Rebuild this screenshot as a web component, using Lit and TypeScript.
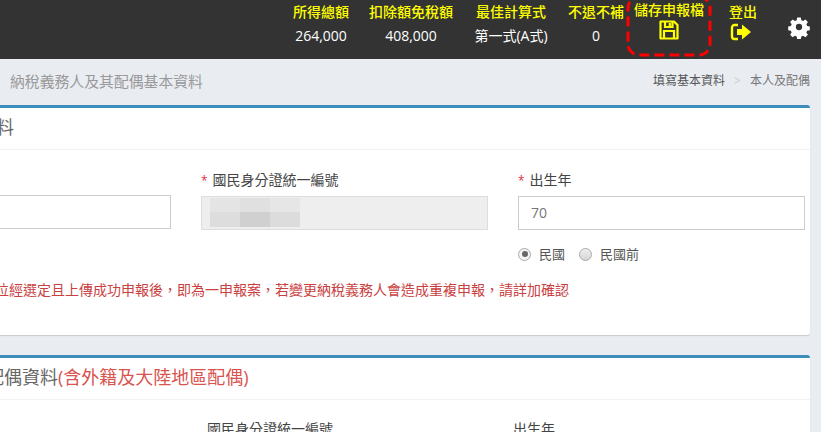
import { LitElement, html, css } from "lit";
import { customElement } from "lit/decorators.js";

@customElement("app-root")
export class AppRoot extends LitElement {
  static styles = css`
    :host {
      display: block;
      width: 821px;
      height: 432px;
      overflow: hidden;
      position: relative;
      background: #e9edf2;
      font-family: "Open Sans", "Noto Sans CJK TC", sans-serif;
      font-size: 14px;
      color: #444;
    }
    .top {
      height: 59px;
      background: #333;
      display: grid;
      grid-template-columns: 84px 96px 104px 66px 80px 68px 44px;
      justify-content: end;
      position: relative;
    }
    .cell {
      display: flex;
      flex-direction: column;
      align-items: center;
      color: #fff;
      padding-top: 2px;
      white-space: nowrap;
    }
    .lab {
      color: #ff0;
      font-weight: 500;
      font-size: 14px;
      line-height: 20px;
    }
    .val {
      margin-top: 4px;
      line-height: 20px;
      font-size: 14px;
    }
    .save { padding-top: 0; }
    .save svg { display: block; }
    .logout svg { display: block; margin-right: 4px; }
    .gear { padding-top: 15px; }
    .dash { position: absolute; left: 626px; top: -5px; }
    .crumbs {
      height: 46px;
      display: flex;
      justify-content: space-between;
      padding: 0 11px 0 10px;
    }
    .pagetitle {
      font-size: 14.85px;
      color: #999;
      line-height: 44px;
    }
    .trail {
      font-size: 12px;
      line-height: 44px;
      color: #555;
      display: flex;
    }
    .sep { color: #ccc; margin: 0 9px; }
    .trail .now { color: #777; }
    .card {
      margin-left: -131px;
      width: 941px;
      box-sizing: border-box;
      background: #fff;
      border-top: 3px solid #3c8dbc;
      border-radius: 3px;
      box-shadow: 0 1px 1px rgba(0, 0, 0, 0.15);
    }
    .one { height: 230px; margin-bottom: 20px; }
    .two { height: 120px; }
    .head {
      height: 41px;
      border-bottom: 1px solid #f2f2f2;
      font-size: 18px;
      line-height: 39px;
      color: #666;
      white-space: nowrap;
    }
    .one .head { padding-left: 73px; }
    .two .head { padding-left: 117px; }
    .paren { color: #d9534f; }
    .row {
      display: grid;
      grid-template-columns: 287px 287px 287px;
      column-gap: 30px;
      padding: 19px 0 0 15px;
    }
    label {
      display: block;
      line-height: 22px;
      font-size: 14px;
      margin-bottom: 4px;
      color: #444;
    }
    .star { color: #d9323a; font-size: 12px; margin-right: 5px; }
    .input {
      height: 34px;
      box-sizing: border-box;
      border: 1px solid #ccc;
      padding: 0 12px;
      line-height: 32px;
      color: #777;
      background: #fff;
    }
    .input.off {
      background: #eee;
      border-color: #ddd;
      padding: 0 0 0 8px;
    }
    .blur {
      display: grid;
      grid-template-columns: repeat(3, 30px);
      grid-template-rows: 14px 15px;
      padding-top: 1px;
    }
    .blur i { display: block; }
    .radios {
      display: flex;
      align-items: center;
      margin-top: 15px;
      font-size: 13px;
      line-height: 18px;
      color: #555;
    }
    .radio {
      width: 11px;
      height: 11px;
      border-radius: 50%;
      border: 1px solid #aaa;
      background: linear-gradient(#eee, #d6d6d6);
      display: flex;
      align-items: center;
      justify-content: center;
      margin-right: 8px;
    }
    .radio.on { background: #f4f4f4; }
    .radio.on::after {
      content: "";
      width: 6px;
      height: 6px;
      border-radius: 50%;
      background: #666;
    }
    .gap { margin-right: 14px; }
    .note {
      color: #c9413f;
      font-size: 14px;
      line-height: 20px;
      white-space: nowrap;
      padding-left: 126px;
      margin-top: 17px;
    }
    .row2 {
      display: grid;
      grid-template-columns: 306px 306px;
      padding: 18px 0 0 338px;
    }
  `;

  render() {
    const blur = ["#e4e4e4", "#e0e0e0", "#e6e6e6", "#dddddd", "#d0d0d0", "#dcdcdc"];
    return html`
      <div class="top">
        <div class="cell"><span class="lab">所得總額</span><span class="val">264,000</span></div>
        <div class="cell"><span class="lab">扣除額免稅額</span><span class="val">408,000</span></div>
        <div class="cell"><span class="lab">最佳計算式</span><span class="val">第一式(A式)</span></div>
        <div class="cell"><span class="lab">不退不補</span><span class="val">0</span></div>
        <div class="cell save">
          <span class="lab">儲存申報檔</span>
          <svg width="20" height="20" viewBox="0 0 20 20" fill="none" stroke="#ff0" stroke-width="2.200">
            <path d="M1.500 1.500h13.500l3.500 3.500v13.500H1.500z" stroke-linejoin="round" />
            <path d="M6 2v5h7.500V2" />
            <path d="M5 18v-7h10v7" />
            <path d="M10.800 3v3" />
          </svg>
        </div>
        <div class="cell logout">
          <span class="lab">登出</span>
          <svg width="22" height="20" viewBox="0 0 22 20">
            <path d="M8 3H4.500A2.500 2.500 0 0 0 2 5.500v9A2.500 2.500 0 0 0 4.500 17H8" fill="none" stroke="#ff0" stroke-width="2.400" />
            <path d="M7 7h5V2.500L21 10l-9 7.500V13H7z" fill="#ff0" />
          </svg>
        </div>
        <div class="cell gear">
          <svg width="24" height="24" viewBox="0 0 24 24">
            <path fill="#fff" fill-rule="evenodd" d="M10 1.500h4l.6 3 1.900.8 2.600-1.700 2.800 2.800-1.700 2.600.8 1.900 3 .6v4l-3 .6-.8 1.900 1.700 2.600-2.800 2.800-2.600-1.700-1.900.8-.6 3h-4l-.6-3-1.900-.8-2.600 1.700-2.800-2.800 1.700-2.600-.8-1.900-3-.6v-4l3-.6.8-1.900-1.700-2.600 2.800-2.800 2.600 1.700 1.900-.8zM12 8.500a3.500 3.500 0 1 0 0 7 3.500 3.500 0 0 0 0-7z" transform="translate(1.200 1.200) scale(.9)" />
          </svg>
        </div>
        <svg class="dash" width="86" height="62" viewBox="0 0 86 62" fill="none">
          <rect x="2" y="2" width="82" height="58" rx="11" stroke="#f00" stroke-width="3" stroke-dasharray="10 5" />
        </svg>
      </div>

      <div class="crumbs">
        <span class="pagetitle">納稅義務人及其配偶基本資料</span>
        <span class="trail"><span>填寫基本資料</span><span class="sep">&gt;</span><span class="now">本人及配偶</span></span>
      </div>

      <section class="card one">
        <div class="head">基本資料</div>
        <div class="row">
          <div>
            <label>姓名</label>
            <div class="input"></div>
          </div>
          <div>
            <label><span class="star">*</span>國民身分證統一編號</label>
            <div class="input off">
              <div class="blur">${blur.map((c) => html`<i style="background:${c}"></i>`)}</div>
            </div>
          </div>
          <div>
            <label><span class="star">*</span>出生年</label>
            <div class="input">70</div>
            <div class="radios">
              <span class="radio on"></span><span class="gap">民國</span>
              <span class="radio"></span><span>民國前</span>
            </div>
          </div>
        </div>
        <div class="note">位經選定且上傳成功申報後&#xFF0C;即為一申報案&#xFF0C;若變更納稅義務人會造成重複申報&#xFF0C;請詳加確認</div>
      </section>

      <section class="card two">
        <div class="head">配偶資料<span class="paren">(含外籍及大陸地區配偶)</span></div>
        <div class="row2">
          <label>國民身分證統一編號</label>
          <label>出生年</label>
        </div>
      </section>
    `;
  }
}
